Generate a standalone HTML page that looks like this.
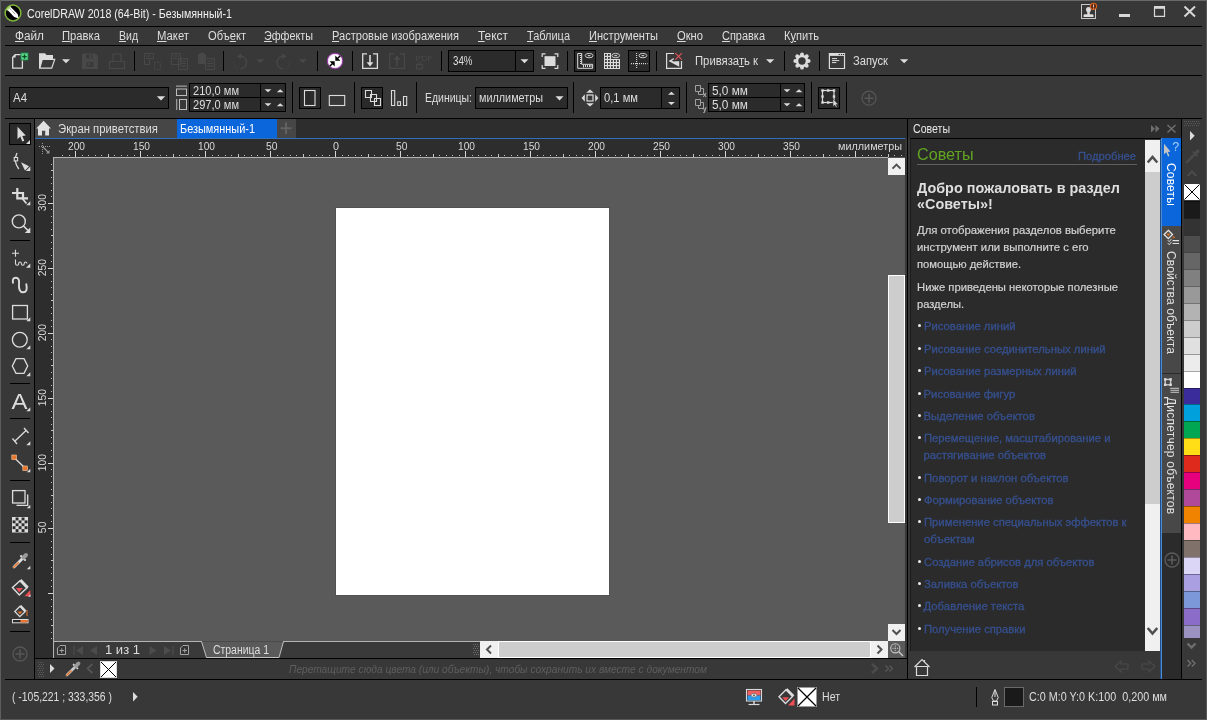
<!DOCTYPE html>
<html lang="ru"><head><meta charset="utf-8"><title>CorelDRAW 2018</title>
<style>
html,body{margin:0;padding:0}
body{width:1207px;height:720px;overflow:hidden;position:relative;background:#383838;font-family:'Liberation Sans',sans-serif;}
.root{position:absolute;left:0;top:0;width:1207px;height:720px;will-change:transform}
.a{position:absolute;display:block}
.t{white-space:pre;transform-origin:0 0;}
u{text-decoration:underline;text-underline-offset:1px}
</style></head>
<body>
<div class="root">
<div class="a" style="left:5px;top:26px;width:1197px;height:1px;background:#000;"></div>
<div class="a" style="left:5px;top:45px;width:1197px;height:1px;background:#000;"></div>
<div class="a" style="left:5px;top:75px;width:1197px;height:1px;background:#000;"></div>
<div class="a" style="left:5px;top:118px;width:1197px;height:1px;background:#000;"></div>
<div class="a" style="left:5px;top:679px;width:1197px;height:1px;background:#000;"></div>
<span class="a t" style="left:27px;top:6.24px;font-size:12px;line-height:17px;color:#f0f0f0;transform:scaleX(0.8887);">CorelDRAW 2018 (64-Bit) - Безымянный-1</span>
<span class="a t" style="left:15px;top:27.84px;font-size:12px;line-height:17px;color:#dedede;transform:scaleX(0.9825);"><u>Ф</u>айл</span>
<span class="a t" style="left:62px;top:27.84px;font-size:12px;line-height:17px;color:#dedede;transform:scaleX(0.9372);"><u>П</u>равка</span>
<span class="a t" style="left:119px;top:27.84px;font-size:12px;line-height:17px;color:#dedede;transform:scaleX(0.8748);"><u>В</u>ид</span>
<span class="a t" style="left:157px;top:27.84px;font-size:12px;line-height:17px;color:#dedede;transform:scaleX(0.9420);"><u>М</u>акет</span>
<span class="a t" style="left:208px;top:27.84px;font-size:12px;line-height:17px;color:#dedede;transform:scaleX(0.9297);">Объ<u>е</u>кт</span>
<span class="a t" style="left:264px;top:27.84px;font-size:12px;line-height:17px;color:#dedede;transform:scaleX(0.8981);"><u>Э</u>ффекты</span>
<span class="a t" style="left:332px;top:27.84px;font-size:12px;line-height:17px;color:#dedede;transform:scaleX(0.9228);"><u>Р</u>астровые изображения</span>
<span class="a t" style="left:478px;top:27.84px;font-size:12px;line-height:17px;color:#dedede;transform:scaleX(0.9928);"><u>Т</u>екст</span>
<span class="a t" style="left:527px;top:27.84px;font-size:12px;line-height:17px;color:#dedede;transform:scaleX(0.9137);"><u>Т</u>аблица</span>
<span class="a t" style="left:589px;top:27.84px;font-size:12px;line-height:17px;color:#dedede;transform:scaleX(0.9221);"><u>И</u>нструменты</span>
<span class="a t" style="left:677px;top:27.84px;font-size:12px;line-height:17px;color:#dedede;transform:scaleX(0.9322);"><u>О</u>кно</span>
<span class="a t" style="left:722px;top:27.84px;font-size:12px;line-height:17px;color:#dedede;transform:scaleX(0.9134);"><u>С</u>правка</span>
<span class="a t" style="left:784px;top:27.84px;font-size:12px;line-height:17px;color:#dedede;transform:scaleX(0.9222);">К<u>у</u>пить</span>
<div class="a" style="left:134px;top:51px;width:1px;height:20px;background:#000;"></div>
<div class="a" style="left:223px;top:51px;width:1px;height:20px;background:#000;"></div>
<div class="a" style="left:317px;top:51px;width:1px;height:20px;background:#000;"></div>
<div class="a" style="left:352px;top:51px;width:1px;height:20px;background:#000;"></div>
<div class="a" style="left:441px;top:51px;width:1px;height:20px;background:#000;"></div>
<div class="a" style="left:567px;top:51px;width:1px;height:20px;background:#000;"></div>
<div class="a" style="left:656px;top:51px;width:1px;height:20px;background:#000;"></div>
<div class="a" style="left:784px;top:51px;width:1px;height:20px;background:#000;"></div>
<div class="a" style="left:819px;top:51px;width:1px;height:20px;background:#000;"></div>
<div class="a" style="left:448px;top:50px;width:86px;height:22px;background:#2b2b2b;border:1px solid #000;box-sizing:border-box;"></div>
<div class="a" style="left:515px;top:51px;width:1px;height:20px;background:#000;"></div>
<span class="a t" style="left:453px;top:53.24px;font-size:12px;line-height:17px;color:#dedede;transform:scaleX(0.8114);">34%</span>
<div class="a" style="left:574px;top:50px;width:22px;height:22px;background:#2a2a2a;border:1px solid #000;box-sizing:border-box;"></div>
<div class="a" style="left:628px;top:50px;width:22px;height:22px;background:#2a2a2a;border:1px solid #000;box-sizing:border-box;"></div>
<span class="a t" style="left:695px;top:53.24px;font-size:12px;line-height:17px;color:#dedede;transform:scaleX(0.9405);">Привяза<u>т</u>ь к</span>
<span class="a t" style="left:853px;top:53.24px;font-size:12px;line-height:17px;color:#dedede;transform:scaleX(0.9322);">Запуск</span>
<div class="a" style="left:292px;top:82px;width:1px;height:31px;background:#000;"></div>
<div class="a" style="left:354px;top:82px;width:1px;height:31px;background:#000;"></div>
<div class="a" style="left:416px;top:82px;width:1px;height:31px;background:#000;"></div>
<div class="a" style="left:573px;top:82px;width:1px;height:31px;background:#000;"></div>
<div class="a" style="left:686px;top:82px;width:1px;height:31px;background:#000;"></div>
<div class="a" style="left:811px;top:82px;width:1px;height:31px;background:#000;"></div>
<div class="a" style="left:846px;top:82px;width:1px;height:31px;background:#000;"></div>
<div class="a" style="left:9px;top:87px;width:160px;height:22px;background:#2b2b2b;border:1px solid #000;box-sizing:border-box;"></div>
<span class="a t" style="left:13px;top:90.24px;font-size:12px;line-height:17px;color:#dedede;transform:scaleX(0.9532);">A4</span>
<div class="a" style="left:189px;top:83px;width:97px;height:15px;background:#2b2b2b;border:1px solid #000;box-sizing:border-box;"></div>
<div class="a" style="left:189px;top:97px;width:97px;height:15px;background:#2b2b2b;border:1px solid #000;box-sizing:border-box;"></div>
<div class="a" style="left:260px;top:84px;width:1px;height:27px;background:#000;"></div>
<span class="a t" style="left:193px;top:83.24px;font-size:12px;line-height:17px;color:#dedede;transform:scaleX(0.9223);">210,0 мм</span>
<span class="a t" style="left:193px;top:97.24px;font-size:12px;line-height:17px;color:#dedede;transform:scaleX(0.9223);">297,0 мм</span>
<div class="a" style="left:299px;top:87px;width:22px;height:22px;background:#2a2a2a;border:1px solid #000;box-sizing:border-box;"></div>
<div class="a" style="left:361px;top:87px;width:22px;height:22px;background:#2a2a2a;border:1px solid #000;box-sizing:border-box;"></div>
<span class="a t" style="left:425px;top:90.24px;font-size:12px;line-height:17px;color:#dedede;transform:scaleX(0.8724);">Единицы:</span>
<div class="a" style="left:475px;top:87px;width:93px;height:22px;background:#2b2b2b;border:1px solid #000;box-sizing:border-box;"></div>
<span class="a t" style="left:479px;top:90.24px;font-size:12px;line-height:17px;color:#dedede;transform:scaleX(0.9016);">миллиметры</span>
<div class="a" style="left:600px;top:87px;width:80px;height:22px;background:#2b2b2b;border:1px solid #000;box-sizing:border-box;"></div>
<div class="a" style="left:661px;top:88px;width:1px;height:20px;background:#000;"></div>
<span class="a t" style="left:604px;top:90.24px;font-size:12px;line-height:17px;color:#dedede;transform:scaleX(0.9311);">0,1 мм</span>
<div class="a" style="left:708px;top:83px;width:97px;height:15px;background:#2b2b2b;border:1px solid #000;box-sizing:border-box;"></div>
<div class="a" style="left:708px;top:97px;width:97px;height:15px;background:#2b2b2b;border:1px solid #000;box-sizing:border-box;"></div>
<div class="a" style="left:780px;top:84px;width:1px;height:27px;background:#000;"></div>
<span class="a t" style="left:712px;top:83.24px;font-size:12px;line-height:17px;color:#dedede;transform:scaleX(0.9859);">5,0 мм</span>
<span class="a t" style="left:712px;top:97.24px;font-size:12px;line-height:17px;color:#dedede;transform:scaleX(0.9859);">5,0 мм</span>
<div class="a" style="left:818px;top:87px;width:22px;height:22px;background:#2a2a2a;border:1px solid #000;box-sizing:border-box;"></div>
<div class="a" style="left:34px;top:118px;width:1px;height:561px;background:#000;"></div>
<div class="a" style="left:9px;top:123px;width:22px;height:22px;background:#2a2a2a;border:1px solid #000;box-sizing:border-box;"></div>
<div class="a" style="left:10px;top:178px;width:20px;height:1px;background:#000;"></div>
<div class="a" style="left:10px;top:240px;width:20px;height:1px;background:#000;"></div>
<div class="a" style="left:10px;top:383px;width:20px;height:1px;background:#000;"></div>
<div class="a" style="left:10px;top:418px;width:20px;height:1px;background:#000;"></div>
<div class="a" style="left:10px;top:480px;width:20px;height:1px;background:#000;"></div>
<div class="a" style="left:10px;top:542px;width:20px;height:1px;background:#000;"></div>
<div class="a" style="left:10px;top:631px;width:20px;height:1px;background:#000;"></div>
<div class="a" style="left:35px;top:119px;width:872px;height:19px;background:#2d2d2d;"></div>
<div class="a" style="left:35px;top:119px;width:142px;height:19px;background:#464646;"></div>
<div class="a" style="left:177px;top:119px;width:100px;height:19px;background:#0a66da;"></div>
<div class="a" style="left:277px;top:119px;width:19px;height:19px;background:#464646;"></div>
<span class="a t" style="left:58px;top:121.24px;font-size:12px;line-height:17px;color:#dedede;transform:scaleX(0.9433);">Экран приветствия</span>
<span class="a t" style="left:180px;top:121.24px;font-size:12px;line-height:17px;color:#ffffff;transform:scaleX(0.9100);">Безымянный-1</span>
<div class="a" style="left:35px;top:138px;width:870px;height:1px;background:#2e6fc0;"></div>
<div class="a" style="left:35px;top:139px;width:870px;height:18px;background:#2d2d2d;"></div>
<div class="a" style="left:35px;top:157px;width:18px;height:484px;background:#2d2d2d;"></div>
<div class="a" style="left:53px;top:157px;width:852px;height:484px;background:#5a5a5a;"></div>
<div class="a" style="left:53px;top:157px;width:835px;height:1px;background:#b4b4b4;"></div>
<div class="a" style="left:53px;top:157px;width:1px;height:501px;background:#b4b4b4;"></div>
<div class="a" style="left:335px;top:207px;width:275px;height:389px;background:#515151;"></div>
<div class="a" style="left:336px;top:208px;width:273px;height:387px;background:#ffffff;"></div>
<div class="a" style="left:62px;top:155px;width:1px;height:1px;background:#c0c0c0;"></div>
<div class="a" style="left:69px;top:155px;width:1px;height:1px;background:#c0c0c0;"></div>
<div class="a" style="left:75px;top:151px;width:1px;height:6px;background:#d4d4d4;"></div>
<div class="a" style="left:82px;top:155px;width:1px;height:1px;background:#c0c0c0;"></div>
<div class="a" style="left:88px;top:155px;width:1px;height:1px;background:#c0c0c0;"></div>
<div class="a" style="left:95px;top:155px;width:1px;height:1px;background:#c0c0c0;"></div>
<div class="a" style="left:101px;top:155px;width:1px;height:1px;background:#c0c0c0;"></div>
<div class="a" style="left:108px;top:154px;width:1px;height:3px;background:#c4c4c4;"></div>
<div class="a" style="left:114px;top:155px;width:1px;height:1px;background:#c0c0c0;"></div>
<div class="a" style="left:121px;top:155px;width:1px;height:1px;background:#c0c0c0;"></div>
<div class="a" style="left:127px;top:155px;width:1px;height:1px;background:#c0c0c0;"></div>
<div class="a" style="left:134px;top:155px;width:1px;height:1px;background:#c0c0c0;"></div>
<div class="a" style="left:140px;top:151px;width:1px;height:6px;background:#d4d4d4;"></div>
<div class="a" style="left:147px;top:155px;width:1px;height:1px;background:#c0c0c0;"></div>
<div class="a" style="left:153px;top:155px;width:1px;height:1px;background:#c0c0c0;"></div>
<div class="a" style="left:160px;top:155px;width:1px;height:1px;background:#c0c0c0;"></div>
<div class="a" style="left:166px;top:155px;width:1px;height:1px;background:#c0c0c0;"></div>
<div class="a" style="left:173px;top:154px;width:1px;height:3px;background:#c4c4c4;"></div>
<div class="a" style="left:179px;top:155px;width:1px;height:1px;background:#c0c0c0;"></div>
<div class="a" style="left:186px;top:155px;width:1px;height:1px;background:#c0c0c0;"></div>
<div class="a" style="left:192px;top:155px;width:1px;height:1px;background:#c0c0c0;"></div>
<div class="a" style="left:199px;top:155px;width:1px;height:1px;background:#c0c0c0;"></div>
<div class="a" style="left:205px;top:151px;width:1px;height:6px;background:#d4d4d4;"></div>
<div class="a" style="left:212px;top:155px;width:1px;height:1px;background:#c0c0c0;"></div>
<div class="a" style="left:218px;top:155px;width:1px;height:1px;background:#c0c0c0;"></div>
<div class="a" style="left:225px;top:155px;width:1px;height:1px;background:#c0c0c0;"></div>
<div class="a" style="left:231px;top:155px;width:1px;height:1px;background:#c0c0c0;"></div>
<div class="a" style="left:238px;top:154px;width:1px;height:3px;background:#c4c4c4;"></div>
<div class="a" style="left:244px;top:155px;width:1px;height:1px;background:#c0c0c0;"></div>
<div class="a" style="left:251px;top:155px;width:1px;height:1px;background:#c0c0c0;"></div>
<div class="a" style="left:257px;top:155px;width:1px;height:1px;background:#c0c0c0;"></div>
<div class="a" style="left:264px;top:155px;width:1px;height:1px;background:#c0c0c0;"></div>
<div class="a" style="left:270px;top:151px;width:1px;height:6px;background:#d4d4d4;"></div>
<div class="a" style="left:277px;top:155px;width:1px;height:1px;background:#c0c0c0;"></div>
<div class="a" style="left:283px;top:155px;width:1px;height:1px;background:#c0c0c0;"></div>
<div class="a" style="left:290px;top:155px;width:1px;height:1px;background:#c0c0c0;"></div>
<div class="a" style="left:296px;top:155px;width:1px;height:1px;background:#c0c0c0;"></div>
<div class="a" style="left:303px;top:154px;width:1px;height:3px;background:#c4c4c4;"></div>
<div class="a" style="left:309px;top:155px;width:1px;height:1px;background:#c0c0c0;"></div>
<div class="a" style="left:316px;top:155px;width:1px;height:1px;background:#c0c0c0;"></div>
<div class="a" style="left:322px;top:155px;width:1px;height:1px;background:#c0c0c0;"></div>
<div class="a" style="left:329px;top:155px;width:1px;height:1px;background:#c0c0c0;"></div>
<div class="a" style="left:335px;top:151px;width:1px;height:6px;background:#d4d4d4;"></div>
<div class="a" style="left:342px;top:155px;width:1px;height:1px;background:#c0c0c0;"></div>
<div class="a" style="left:348px;top:155px;width:1px;height:1px;background:#c0c0c0;"></div>
<div class="a" style="left:355px;top:155px;width:1px;height:1px;background:#c0c0c0;"></div>
<div class="a" style="left:361px;top:155px;width:1px;height:1px;background:#c0c0c0;"></div>
<div class="a" style="left:368px;top:154px;width:1px;height:3px;background:#c4c4c4;"></div>
<div class="a" style="left:374px;top:155px;width:1px;height:1px;background:#c0c0c0;"></div>
<div class="a" style="left:381px;top:155px;width:1px;height:1px;background:#c0c0c0;"></div>
<div class="a" style="left:387px;top:155px;width:1px;height:1px;background:#c0c0c0;"></div>
<div class="a" style="left:394px;top:155px;width:1px;height:1px;background:#c0c0c0;"></div>
<div class="a" style="left:400px;top:151px;width:1px;height:6px;background:#d4d4d4;"></div>
<div class="a" style="left:407px;top:155px;width:1px;height:1px;background:#c0c0c0;"></div>
<div class="a" style="left:413px;top:155px;width:1px;height:1px;background:#c0c0c0;"></div>
<div class="a" style="left:420px;top:155px;width:1px;height:1px;background:#c0c0c0;"></div>
<div class="a" style="left:426px;top:155px;width:1px;height:1px;background:#c0c0c0;"></div>
<div class="a" style="left:433px;top:154px;width:1px;height:3px;background:#c4c4c4;"></div>
<div class="a" style="left:439px;top:155px;width:1px;height:1px;background:#c0c0c0;"></div>
<div class="a" style="left:446px;top:155px;width:1px;height:1px;background:#c0c0c0;"></div>
<div class="a" style="left:452px;top:155px;width:1px;height:1px;background:#c0c0c0;"></div>
<div class="a" style="left:459px;top:155px;width:1px;height:1px;background:#c0c0c0;"></div>
<div class="a" style="left:465px;top:151px;width:1px;height:6px;background:#d4d4d4;"></div>
<div class="a" style="left:472px;top:155px;width:1px;height:1px;background:#c0c0c0;"></div>
<div class="a" style="left:478px;top:155px;width:1px;height:1px;background:#c0c0c0;"></div>
<div class="a" style="left:485px;top:155px;width:1px;height:1px;background:#c0c0c0;"></div>
<div class="a" style="left:491px;top:155px;width:1px;height:1px;background:#c0c0c0;"></div>
<div class="a" style="left:498px;top:154px;width:1px;height:3px;background:#c4c4c4;"></div>
<div class="a" style="left:504px;top:155px;width:1px;height:1px;background:#c0c0c0;"></div>
<div class="a" style="left:511px;top:155px;width:1px;height:1px;background:#c0c0c0;"></div>
<div class="a" style="left:517px;top:155px;width:1px;height:1px;background:#c0c0c0;"></div>
<div class="a" style="left:524px;top:155px;width:1px;height:1px;background:#c0c0c0;"></div>
<div class="a" style="left:530px;top:151px;width:1px;height:6px;background:#d4d4d4;"></div>
<div class="a" style="left:537px;top:155px;width:1px;height:1px;background:#c0c0c0;"></div>
<div class="a" style="left:543px;top:155px;width:1px;height:1px;background:#c0c0c0;"></div>
<div class="a" style="left:550px;top:155px;width:1px;height:1px;background:#c0c0c0;"></div>
<div class="a" style="left:556px;top:155px;width:1px;height:1px;background:#c0c0c0;"></div>
<div class="a" style="left:563px;top:154px;width:1px;height:3px;background:#c4c4c4;"></div>
<div class="a" style="left:569px;top:155px;width:1px;height:1px;background:#c0c0c0;"></div>
<div class="a" style="left:576px;top:155px;width:1px;height:1px;background:#c0c0c0;"></div>
<div class="a" style="left:582px;top:155px;width:1px;height:1px;background:#c0c0c0;"></div>
<div class="a" style="left:589px;top:155px;width:1px;height:1px;background:#c0c0c0;"></div>
<div class="a" style="left:595px;top:151px;width:1px;height:6px;background:#d4d4d4;"></div>
<div class="a" style="left:602px;top:155px;width:1px;height:1px;background:#c0c0c0;"></div>
<div class="a" style="left:608px;top:155px;width:1px;height:1px;background:#c0c0c0;"></div>
<div class="a" style="left:615px;top:155px;width:1px;height:1px;background:#c0c0c0;"></div>
<div class="a" style="left:621px;top:155px;width:1px;height:1px;background:#c0c0c0;"></div>
<div class="a" style="left:628px;top:154px;width:1px;height:3px;background:#c4c4c4;"></div>
<div class="a" style="left:634px;top:155px;width:1px;height:1px;background:#c0c0c0;"></div>
<div class="a" style="left:641px;top:155px;width:1px;height:1px;background:#c0c0c0;"></div>
<div class="a" style="left:647px;top:155px;width:1px;height:1px;background:#c0c0c0;"></div>
<div class="a" style="left:654px;top:155px;width:1px;height:1px;background:#c0c0c0;"></div>
<div class="a" style="left:660px;top:151px;width:1px;height:6px;background:#d4d4d4;"></div>
<div class="a" style="left:667px;top:155px;width:1px;height:1px;background:#c0c0c0;"></div>
<div class="a" style="left:673px;top:155px;width:1px;height:1px;background:#c0c0c0;"></div>
<div class="a" style="left:680px;top:155px;width:1px;height:1px;background:#c0c0c0;"></div>
<div class="a" style="left:686px;top:155px;width:1px;height:1px;background:#c0c0c0;"></div>
<div class="a" style="left:693px;top:154px;width:1px;height:3px;background:#c4c4c4;"></div>
<div class="a" style="left:699px;top:155px;width:1px;height:1px;background:#c0c0c0;"></div>
<div class="a" style="left:706px;top:155px;width:1px;height:1px;background:#c0c0c0;"></div>
<div class="a" style="left:712px;top:155px;width:1px;height:1px;background:#c0c0c0;"></div>
<div class="a" style="left:719px;top:155px;width:1px;height:1px;background:#c0c0c0;"></div>
<div class="a" style="left:725px;top:151px;width:1px;height:6px;background:#d4d4d4;"></div>
<div class="a" style="left:732px;top:155px;width:1px;height:1px;background:#c0c0c0;"></div>
<div class="a" style="left:738px;top:155px;width:1px;height:1px;background:#c0c0c0;"></div>
<div class="a" style="left:745px;top:155px;width:1px;height:1px;background:#c0c0c0;"></div>
<div class="a" style="left:751px;top:155px;width:1px;height:1px;background:#c0c0c0;"></div>
<div class="a" style="left:758px;top:154px;width:1px;height:3px;background:#c4c4c4;"></div>
<div class="a" style="left:764px;top:155px;width:1px;height:1px;background:#c0c0c0;"></div>
<div class="a" style="left:771px;top:155px;width:1px;height:1px;background:#c0c0c0;"></div>
<div class="a" style="left:777px;top:155px;width:1px;height:1px;background:#c0c0c0;"></div>
<div class="a" style="left:784px;top:155px;width:1px;height:1px;background:#c0c0c0;"></div>
<div class="a" style="left:790px;top:151px;width:1px;height:6px;background:#d4d4d4;"></div>
<div class="a" style="left:797px;top:155px;width:1px;height:1px;background:#c0c0c0;"></div>
<div class="a" style="left:803px;top:155px;width:1px;height:1px;background:#c0c0c0;"></div>
<div class="a" style="left:810px;top:155px;width:1px;height:1px;background:#c0c0c0;"></div>
<div class="a" style="left:816px;top:155px;width:1px;height:1px;background:#c0c0c0;"></div>
<div class="a" style="left:823px;top:154px;width:1px;height:3px;background:#c4c4c4;"></div>
<div class="a" style="left:829px;top:155px;width:1px;height:1px;background:#c0c0c0;"></div>
<div class="a" style="left:836px;top:155px;width:1px;height:1px;background:#c0c0c0;"></div>
<div class="a" style="left:842px;top:155px;width:1px;height:1px;background:#c0c0c0;"></div>
<div class="a" style="left:849px;top:155px;width:1px;height:1px;background:#c0c0c0;"></div>
<div class="a" style="left:855px;top:151px;width:1px;height:6px;background:#d4d4d4;"></div>
<div class="a" style="left:862px;top:155px;width:1px;height:1px;background:#c0c0c0;"></div>
<div class="a" style="left:868px;top:155px;width:1px;height:1px;background:#c0c0c0;"></div>
<div class="a" style="left:875px;top:155px;width:1px;height:1px;background:#c0c0c0;"></div>
<div class="a" style="left:881px;top:155px;width:1px;height:1px;background:#c0c0c0;"></div>
<div class="a" style="left:888px;top:154px;width:1px;height:3px;background:#c4c4c4;"></div>
<div class="a" style="left:894px;top:155px;width:1px;height:1px;background:#c0c0c0;"></div>
<div class="a" style="left:901px;top:155px;width:1px;height:1px;background:#c0c0c0;"></div>
<span class="a t" style="left:67.8px;top:138.69px;font-size:11px;line-height:15px;color:#d8d8d8;transform:scaleX(0.9260);">200</span>
<span class="a t" style="left:132.8px;top:138.69px;font-size:11px;line-height:15px;color:#d8d8d8;transform:scaleX(0.9260);">150</span>
<span class="a t" style="left:197.8px;top:138.69px;font-size:11px;line-height:15px;color:#d8d8d8;transform:scaleX(0.9260);">100</span>
<span class="a t" style="left:265.6px;top:138.69px;font-size:11px;line-height:15px;color:#d8d8d8;transform:scaleX(0.9388);">50</span>
<span class="a t" style="left:333.3px;top:138.69px;font-size:11px;line-height:15px;color:#d8d8d8;transform:scaleX(0.9796);">0</span>
<span class="a t" style="left:395.6px;top:138.69px;font-size:11px;line-height:15px;color:#d8d8d8;transform:scaleX(0.9388);">50</span>
<span class="a t" style="left:457.8px;top:138.69px;font-size:11px;line-height:15px;color:#d8d8d8;transform:scaleX(0.9260);">100</span>
<span class="a t" style="left:522.8px;top:138.69px;font-size:11px;line-height:15px;color:#d8d8d8;transform:scaleX(0.9260);">150</span>
<span class="a t" style="left:587.8px;top:138.69px;font-size:11px;line-height:15px;color:#d8d8d8;transform:scaleX(0.9260);">200</span>
<span class="a t" style="left:652.8px;top:138.69px;font-size:11px;line-height:15px;color:#d8d8d8;transform:scaleX(0.9260);">250</span>
<span class="a t" style="left:717.8px;top:138.69px;font-size:11px;line-height:15px;color:#d8d8d8;transform:scaleX(0.9260);">300</span>
<span class="a t" style="left:782.8px;top:138.69px;font-size:11px;line-height:15px;color:#d8d8d8;transform:scaleX(0.9260);">350</span>
<span class="a t" style="left:838px;top:138.69px;font-size:11px;line-height:15px;color:#d8d8d8;transform:scaleX(0.9834);">миллиметры</span>
<div class="a" style="left:51px;top:638px;width:1px;height:1px;background:#c0c0c0;"></div>
<div class="a" style="left:51px;top:632px;width:1px;height:1px;background:#c0c0c0;"></div>
<div class="a" style="left:51px;top:625px;width:2px;height:1px;background:#c4c4c4;"></div>
<div class="a" style="left:51px;top:619px;width:1px;height:1px;background:#c0c0c0;"></div>
<div class="a" style="left:51px;top:612px;width:1px;height:1px;background:#c0c0c0;"></div>
<div class="a" style="left:51px;top:606px;width:1px;height:1px;background:#c0c0c0;"></div>
<div class="a" style="left:51px;top:599px;width:1px;height:1px;background:#c0c0c0;"></div>
<div class="a" style="left:48px;top:593px;width:5px;height:1px;background:#d4d4d4;"></div>
<div class="a" style="left:51px;top:586px;width:1px;height:1px;background:#c0c0c0;"></div>
<div class="a" style="left:51px;top:580px;width:1px;height:1px;background:#c0c0c0;"></div>
<div class="a" style="left:51px;top:573px;width:1px;height:1px;background:#c0c0c0;"></div>
<div class="a" style="left:51px;top:567px;width:1px;height:1px;background:#c0c0c0;"></div>
<div class="a" style="left:51px;top:560px;width:2px;height:1px;background:#c4c4c4;"></div>
<div class="a" style="left:51px;top:554px;width:1px;height:1px;background:#c0c0c0;"></div>
<div class="a" style="left:51px;top:547px;width:1px;height:1px;background:#c0c0c0;"></div>
<div class="a" style="left:51px;top:541px;width:1px;height:1px;background:#c0c0c0;"></div>
<div class="a" style="left:51px;top:534px;width:1px;height:1px;background:#c0c0c0;"></div>
<div class="a" style="left:48px;top:528px;width:5px;height:1px;background:#d4d4d4;"></div>
<div class="a" style="left:51px;top:521px;width:1px;height:1px;background:#c0c0c0;"></div>
<div class="a" style="left:51px;top:515px;width:1px;height:1px;background:#c0c0c0;"></div>
<div class="a" style="left:51px;top:508px;width:1px;height:1px;background:#c0c0c0;"></div>
<div class="a" style="left:51px;top:502px;width:1px;height:1px;background:#c0c0c0;"></div>
<div class="a" style="left:51px;top:495px;width:2px;height:1px;background:#c4c4c4;"></div>
<div class="a" style="left:51px;top:489px;width:1px;height:1px;background:#c0c0c0;"></div>
<div class="a" style="left:51px;top:482px;width:1px;height:1px;background:#c0c0c0;"></div>
<div class="a" style="left:51px;top:476px;width:1px;height:1px;background:#c0c0c0;"></div>
<div class="a" style="left:51px;top:469px;width:1px;height:1px;background:#c0c0c0;"></div>
<div class="a" style="left:48px;top:463px;width:5px;height:1px;background:#d4d4d4;"></div>
<div class="a" style="left:51px;top:456px;width:1px;height:1px;background:#c0c0c0;"></div>
<div class="a" style="left:51px;top:450px;width:1px;height:1px;background:#c0c0c0;"></div>
<div class="a" style="left:51px;top:443px;width:1px;height:1px;background:#c0c0c0;"></div>
<div class="a" style="left:51px;top:437px;width:1px;height:1px;background:#c0c0c0;"></div>
<div class="a" style="left:51px;top:430px;width:2px;height:1px;background:#c4c4c4;"></div>
<div class="a" style="left:51px;top:424px;width:1px;height:1px;background:#c0c0c0;"></div>
<div class="a" style="left:51px;top:417px;width:1px;height:1px;background:#c0c0c0;"></div>
<div class="a" style="left:51px;top:411px;width:1px;height:1px;background:#c0c0c0;"></div>
<div class="a" style="left:51px;top:404px;width:1px;height:1px;background:#c0c0c0;"></div>
<div class="a" style="left:48px;top:398px;width:5px;height:1px;background:#d4d4d4;"></div>
<div class="a" style="left:51px;top:391px;width:1px;height:1px;background:#c0c0c0;"></div>
<div class="a" style="left:51px;top:385px;width:1px;height:1px;background:#c0c0c0;"></div>
<div class="a" style="left:51px;top:378px;width:1px;height:1px;background:#c0c0c0;"></div>
<div class="a" style="left:51px;top:372px;width:1px;height:1px;background:#c0c0c0;"></div>
<div class="a" style="left:51px;top:365px;width:2px;height:1px;background:#c4c4c4;"></div>
<div class="a" style="left:51px;top:359px;width:1px;height:1px;background:#c0c0c0;"></div>
<div class="a" style="left:51px;top:352px;width:1px;height:1px;background:#c0c0c0;"></div>
<div class="a" style="left:51px;top:346px;width:1px;height:1px;background:#c0c0c0;"></div>
<div class="a" style="left:51px;top:339px;width:1px;height:1px;background:#c0c0c0;"></div>
<div class="a" style="left:48px;top:333px;width:5px;height:1px;background:#d4d4d4;"></div>
<div class="a" style="left:51px;top:326px;width:1px;height:1px;background:#c0c0c0;"></div>
<div class="a" style="left:51px;top:320px;width:1px;height:1px;background:#c0c0c0;"></div>
<div class="a" style="left:51px;top:313px;width:1px;height:1px;background:#c0c0c0;"></div>
<div class="a" style="left:51px;top:307px;width:1px;height:1px;background:#c0c0c0;"></div>
<div class="a" style="left:51px;top:300px;width:2px;height:1px;background:#c4c4c4;"></div>
<div class="a" style="left:51px;top:294px;width:1px;height:1px;background:#c0c0c0;"></div>
<div class="a" style="left:51px;top:287px;width:1px;height:1px;background:#c0c0c0;"></div>
<div class="a" style="left:51px;top:281px;width:1px;height:1px;background:#c0c0c0;"></div>
<div class="a" style="left:51px;top:274px;width:1px;height:1px;background:#c0c0c0;"></div>
<div class="a" style="left:48px;top:268px;width:5px;height:1px;background:#d4d4d4;"></div>
<div class="a" style="left:51px;top:261px;width:1px;height:1px;background:#c0c0c0;"></div>
<div class="a" style="left:51px;top:255px;width:1px;height:1px;background:#c0c0c0;"></div>
<div class="a" style="left:51px;top:248px;width:1px;height:1px;background:#c0c0c0;"></div>
<div class="a" style="left:51px;top:242px;width:1px;height:1px;background:#c0c0c0;"></div>
<div class="a" style="left:51px;top:235px;width:2px;height:1px;background:#c4c4c4;"></div>
<div class="a" style="left:51px;top:229px;width:1px;height:1px;background:#c0c0c0;"></div>
<div class="a" style="left:51px;top:222px;width:1px;height:1px;background:#c0c0c0;"></div>
<div class="a" style="left:51px;top:216px;width:1px;height:1px;background:#c0c0c0;"></div>
<div class="a" style="left:51px;top:209px;width:1px;height:1px;background:#c0c0c0;"></div>
<div class="a" style="left:48px;top:203px;width:5px;height:1px;background:#d4d4d4;"></div>
<div class="a" style="left:51px;top:196px;width:1px;height:1px;background:#c0c0c0;"></div>
<div class="a" style="left:51px;top:190px;width:1px;height:1px;background:#c0c0c0;"></div>
<div class="a" style="left:51px;top:183px;width:1px;height:1px;background:#c0c0c0;"></div>
<div class="a" style="left:51px;top:177px;width:1px;height:1px;background:#c0c0c0;"></div>
<div class="a" style="left:51px;top:170px;width:2px;height:1px;background:#c4c4c4;"></div>
<div class="a" style="left:51px;top:164px;width:1px;height:1px;background:#c0c0c0;"></div>
<span class="a t" style="left:36.5px;top:202.0px;font-size:11px;line-height:11px;color:#d8d8d8;transform-origin:0 0;transform:rotate(-90deg) translate(-50%,0) scaleX(0.94);">300</span>
<span class="a t" style="left:36.5px;top:267.0px;font-size:11px;line-height:11px;color:#d8d8d8;transform-origin:0 0;transform:rotate(-90deg) translate(-50%,0) scaleX(0.94);">250</span>
<span class="a t" style="left:36.5px;top:332.0px;font-size:11px;line-height:11px;color:#d8d8d8;transform-origin:0 0;transform:rotate(-90deg) translate(-50%,0) scaleX(0.94);">200</span>
<span class="a t" style="left:36.5px;top:397.0px;font-size:11px;line-height:11px;color:#d8d8d8;transform-origin:0 0;transform:rotate(-90deg) translate(-50%,0) scaleX(0.94);">150</span>
<span class="a t" style="left:36.5px;top:462.0px;font-size:11px;line-height:11px;color:#d8d8d8;transform-origin:0 0;transform:rotate(-90deg) translate(-50%,0) scaleX(0.94);">100</span>
<span class="a t" style="left:36.5px;top:527.0px;font-size:11px;line-height:11px;color:#d8d8d8;transform-origin:0 0;transform:rotate(-90deg) translate(-50%,0) scaleX(0.94);">50</span>
<div class="a" style="left:888px;top:158px;width:17px;height:17px;background:#f0f0f0;"></div>
<div class="a" style="left:888px;top:275px;width:17px;height:248px;background:#cdcdcd;border:1px solid #ffffff;box-sizing:border-box;"></div>
<div class="a" style="left:888px;top:624px;width:17px;height:17px;background:#f0f0f0;"></div>
<div class="a" style="left:54px;top:641px;width:426px;height:17px;background:#3a3a3a;"></div>
<div class="a" style="left:35px;top:641px;width:18px;height:17px;background:#2d2d2d;"></div>
<div class="a" style="left:53px;top:641px;width:149px;height:1px;background:#b4b4b4;"></div>
<div class="a" style="left:283px;top:641px;width:197px;height:1px;background:#b4b4b4;"></div>
<svg class="a" style="left:198px;top:641px;" width="90" height="17" viewBox="0 0 90 17"><path d="M3.5 0.5 L8.5 16.5 L81 16.5 L85.5 0.5" fill="#5a5a5a" stroke="#c0c0c0" stroke-width="1"/></svg>
<span class="a t" style="left:105px;top:642.24px;font-size:12px;line-height:17px;color:#dedede;transform:scaleX(1.0858);">1 из 1</span>
<span class="a t" style="left:213px;top:642.24px;font-size:12px;line-height:17px;color:#dedede;transform:scaleX(0.8695);">Страница 1</span>
<div class="a" style="left:480px;top:641px;width:18px;height:17px;background:#f0f0f0;"></div>
<div class="a" style="left:498px;top:641px;width:373px;height:17px;background:#cdcdcd;border:1px solid #ffffff;box-sizing:border-box;"></div>
<div class="a" style="left:871px;top:641px;width:17px;height:17px;background:#f0f0f0;"></div>
<div class="a" style="left:888px;top:641px;width:17px;height:17px;background:#5a5a5a;"></div>
<div class="a" style="left:35px;top:658px;width:872px;height:1px;background:#000;"></div>
<div class="a" style="left:100px;top:661px;width:17px;height:17px;background:#ffffff;border:1px solid #d8d8d8;box-sizing:border-box;"></div>
<svg class="a" style="left:100px;top:661px;" width="17" height="17" viewBox="0 0 17 17"><path d="M1 1L16 16M16 1L1 16" stroke="#000" stroke-width="1"/></svg>
<span class="a t" style="left:289px;top:661.69px;font-size:11px;line-height:15px;color:#5e5e5e;font-style:italic;transform:scaleX(0.9258);">Перетащите сюда цвета (или объекты), чтобы сохранить их вместе с документом</span>
<div class="a" style="left:907px;top:119px;width:1px;height:560px;background:#000;"></div>
<div class="a" style="left:908px;top:119px;width:273px;height:19px;background:#2d2d2d;"></div>
<span class="a t" style="left:913px;top:121.24px;font-size:12px;line-height:17px;color:#e8e8e8;transform:scaleX(0.8813);">Советы</span>
<div class="a" style="left:910px;top:138px;width:252px;height:1px;background:#000;"></div>
<div class="a" style="left:910px;top:139px;width:235px;height:512px;background:#2b2b2b;"></div>
<div class="a" style="left:910px;top:139px;width:1px;height:512px;background:#1c1c1c;"></div>
<div class="a" style="left:1145px;top:140px;width:15px;height:511px;background:#f0f0f0;"></div>
<div class="a" style="left:1145px;top:172px;width:15px;height:332px;background:#cdcdcd;"></div>
<div class="a" style="left:1162px;top:139px;width:19px;height:540px;background:#2b2b2b;"></div>
<div class="a" style="left:1160px;top:139px;width:1px;height:540px;background:#1f4f8a;"></div>
<div class="a" style="left:1161px;top:138px;width:1px;height:541px;background:#4f8bd0;"></div>
<div class="a" style="left:1162px;top:138px;width:19px;height:88px;background:#0a66da;"></div>
<div class="a" style="left:1162px;top:226px;width:19px;height:147px;background:#484848;"></div>
<div class="a" style="left:1162px;top:374px;width:19px;height:159px;background:#484848;"></div>
<div class="a" style="left:1181px;top:119px;width:1px;height:560px;background:#000;"></div>
<span class="a t" style="left:1171px;top:163px;font-size:12px;line-height:12px;color:#ffffff;letter-spacing:0.17px;transform-origin:0 0;transform:rotate(90deg) translate(0,-50%);">Советы</span>
<span class="a t" style="left:1171px;top:251px;font-size:12px;line-height:12px;color:#e0e0e0;letter-spacing:0.14px;transform-origin:0 0;transform:rotate(90deg) translate(0,-50%);">Свойства объекта</span>
<span class="a t" style="left:1171px;top:397px;font-size:12px;line-height:12px;color:#e0e0e0;letter-spacing:0.23px;transform-origin:0 0;transform:rotate(90deg) translate(0,-50%);">Диспетчер объектов</span>
<span class="a t" style="left:917px;top:143.96px;font-size:16px;line-height:22px;color:#62a522;transform:scaleX(1.0095);">Советы</span>
<span class="a t" style="left:1078px;top:147.57px;font-size:11.33px;line-height:16px;color:#36508f;transform:scaleX(0.9872);-webkit-text-stroke:0.3px #36508f;">Подробнее</span>
<div class="a" style="left:917px;top:164px;width:220px;height:1px;background:#5f5f5f;"></div>
<span class="a t" style="left:917px;top:178.01px;font-size:14.4px;line-height:20px;color:#dedede;font-weight:700;">Добро пожаловать в раздел</span>
<span class="a t" style="left:917px;top:194.01px;font-size:14.4px;line-height:20px;color:#dedede;font-weight:700;">«Советы»!</span>
<span class="a t" style="left:917px;top:222.07px;font-size:11.33px;line-height:16px;color:#d2d2d2;-webkit-text-stroke:0.2px #d2d2d2;">Для отображения разделов выберите</span>
<span class="a t" style="left:917px;top:239.07px;font-size:11.33px;line-height:16px;color:#d2d2d2;-webkit-text-stroke:0.2px #d2d2d2;">инструмент или выполните с его</span>
<span class="a t" style="left:917px;top:256.07px;font-size:11.33px;line-height:16px;color:#d2d2d2;transform:scaleX(0.9878);-webkit-text-stroke:0.2px #d2d2d2;">помощью действие.</span>
<span class="a t" style="left:917px;top:279.07px;font-size:11.33px;line-height:16px;color:#d2d2d2;transform:scaleX(0.9932);-webkit-text-stroke:0.2px #d2d2d2;">Ниже приведены некоторые полезные</span>
<span class="a t" style="left:917px;top:296.07px;font-size:11.33px;line-height:16px;color:#d2d2d2;transform:scaleX(0.9820);-webkit-text-stroke:0.2px #d2d2d2;">разделы.</span>
<span class="a t" style="left:923.5px;top:318.07px;font-size:11.33px;line-height:16px;color:#36508f;transform:scaleX(0.9941);-webkit-text-stroke:0.3px #36508f;">Рисование линий</span>
<div class="a" style="left:917.5px;top:324px;width:3px;height:3px;background:#ececec;border-radius:1.5px;"></div>
<span class="a t" style="left:923.5px;top:341.07px;font-size:11.33px;line-height:16px;color:#36508f;transform:scaleX(0.9949);-webkit-text-stroke:0.3px #36508f;">Рисование соединительных линий</span>
<div class="a" style="left:917.5px;top:347px;width:3px;height:3px;background:#ececec;border-radius:1.5px;"></div>
<span class="a t" style="left:923.5px;top:363.07px;font-size:11.33px;line-height:16px;color:#36508f;transform:scaleX(0.9947);-webkit-text-stroke:0.3px #36508f;">Рисование размерных линий</span>
<div class="a" style="left:917.5px;top:369px;width:3px;height:3px;background:#ececec;border-radius:1.5px;"></div>
<span class="a t" style="left:923.5px;top:386.07px;font-size:11.33px;line-height:16px;color:#36508f;-webkit-text-stroke:0.3px #36508f;">Рисование фигур</span>
<div class="a" style="left:917.5px;top:392px;width:3px;height:3px;background:#ececec;border-radius:1.5px;"></div>
<span class="a t" style="left:923.5px;top:408.07px;font-size:11.33px;line-height:16px;color:#36508f;-webkit-text-stroke:0.3px #36508f;">Выделение объектов</span>
<div class="a" style="left:917.5px;top:414px;width:3px;height:3px;background:#ececec;border-radius:1.5px;"></div>
<span class="a t" style="left:923.5px;top:430.07px;font-size:11.33px;line-height:16px;color:#36508f;transform:scaleX(0.9921);-webkit-text-stroke:0.3px #36508f;">Перемещение, масштабирование и</span>
<div class="a" style="left:917.5px;top:436px;width:3px;height:3px;background:#ececec;border-radius:1.5px;"></div>
<span class="a t" style="left:923.5px;top:447.07px;font-size:11.33px;line-height:16px;color:#36508f;-webkit-text-stroke:0.3px #36508f;">растягивание объектов</span>
<span class="a t" style="left:923.5px;top:470.07px;font-size:11.33px;line-height:16px;color:#36508f;transform:scaleX(0.9956);-webkit-text-stroke:0.3px #36508f;">Поворот и наклон объектов</span>
<div class="a" style="left:917.5px;top:476px;width:3px;height:3px;background:#ececec;border-radius:1.5px;"></div>
<span class="a t" style="left:923.5px;top:492.07px;font-size:11.33px;line-height:16px;color:#36508f;transform:scaleX(0.9931);-webkit-text-stroke:0.3px #36508f;">Формирование объектов</span>
<div class="a" style="left:917.5px;top:498px;width:3px;height:3px;background:#ececec;border-radius:1.5px;"></div>
<span class="a t" style="left:923.5px;top:514.07px;font-size:11.33px;line-height:16px;color:#36508f;transform:scaleX(0.9942);-webkit-text-stroke:0.3px #36508f;">Применение специальных эффектов к</span>
<div class="a" style="left:917.5px;top:520px;width:3px;height:3px;background:#ececec;border-radius:1.5px;"></div>
<span class="a t" style="left:923.5px;top:531.07px;font-size:11.33px;line-height:16px;color:#36508f;transform:scaleX(1.0094);-webkit-text-stroke:0.3px #36508f;">объектам</span>
<span class="a t" style="left:923.5px;top:554.07px;font-size:11.33px;line-height:16px;color:#36508f;transform:scaleX(0.9932);-webkit-text-stroke:0.3px #36508f;">Создание абрисов для объектов</span>
<div class="a" style="left:917.5px;top:560px;width:3px;height:3px;background:#ececec;border-radius:1.5px;"></div>
<span class="a t" style="left:923.5px;top:576.07px;font-size:11.33px;line-height:16px;color:#36508f;transform:scaleX(0.9946);-webkit-text-stroke:0.3px #36508f;">Заливка объектов</span>
<div class="a" style="left:917.5px;top:582px;width:3px;height:3px;background:#ececec;border-radius:1.5px;"></div>
<span class="a t" style="left:923.5px;top:598.07px;font-size:11.33px;line-height:16px;color:#36508f;-webkit-text-stroke:0.3px #36508f;">Добавление текста</span>
<div class="a" style="left:917.5px;top:604px;width:3px;height:3px;background:#ececec;border-radius:1.5px;"></div>
<span class="a t" style="left:923.5px;top:621.07px;font-size:11.33px;line-height:16px;color:#36508f;transform:scaleX(0.9912);-webkit-text-stroke:0.3px #36508f;">Получение справки</span>
<div class="a" style="left:917.5px;top:627px;width:3px;height:3px;background:#ececec;border-radius:1.5px;"></div>
<div class="a" style="left:1184px;top:184px;width:16px;height:16px;background:#ffffff;"></div>
<svg class="a" style="left:1184px;top:184px;" width="16" height="16" viewBox="0 0 16 16"><path d="M0.5 0.5L15.5 15.5M15.5 0.5L0.5 15.5" stroke="#000" stroke-width="1"/></svg>
<div class="a" style="left:1184px;top:201px;width:16px;height:17px;background:#1a1a1a;"></div>
<div class="a" style="left:1184px;top:201px;width:16px;height:1px;background:rgba(0,0,0,0.35);"></div>
<div class="a" style="left:1184px;top:218px;width:16px;height:17px;background:#333333;"></div>
<div class="a" style="left:1184px;top:218px;width:16px;height:1px;background:rgba(0,0,0,0.35);"></div>
<div class="a" style="left:1184px;top:235px;width:16px;height:17px;background:#4d4d4d;"></div>
<div class="a" style="left:1184px;top:235px;width:16px;height:1px;background:rgba(0,0,0,0.35);"></div>
<div class="a" style="left:1184px;top:252px;width:16px;height:17px;background:#666666;"></div>
<div class="a" style="left:1184px;top:252px;width:16px;height:1px;background:rgba(0,0,0,0.35);"></div>
<div class="a" style="left:1184px;top:269px;width:16px;height:17px;background:#808080;"></div>
<div class="a" style="left:1184px;top:269px;width:16px;height:1px;background:rgba(0,0,0,0.35);"></div>
<div class="a" style="left:1184px;top:286px;width:16px;height:17px;background:#999999;"></div>
<div class="a" style="left:1184px;top:286px;width:16px;height:1px;background:rgba(0,0,0,0.35);"></div>
<div class="a" style="left:1184px;top:303px;width:16px;height:17px;background:#b3b3b3;"></div>
<div class="a" style="left:1184px;top:303px;width:16px;height:1px;background:rgba(0,0,0,0.35);"></div>
<div class="a" style="left:1184px;top:320px;width:16px;height:17px;background:#cccccc;"></div>
<div class="a" style="left:1184px;top:320px;width:16px;height:1px;background:rgba(0,0,0,0.35);"></div>
<div class="a" style="left:1184px;top:337px;width:16px;height:17px;background:#e0e0e0;"></div>
<div class="a" style="left:1184px;top:337px;width:16px;height:1px;background:rgba(0,0,0,0.35);"></div>
<div class="a" style="left:1184px;top:354px;width:16px;height:17px;background:#ececec;"></div>
<div class="a" style="left:1184px;top:354px;width:16px;height:1px;background:rgba(0,0,0,0.35);"></div>
<div class="a" style="left:1184px;top:371px;width:16px;height:17px;background:#ffffff;"></div>
<div class="a" style="left:1184px;top:371px;width:16px;height:1px;background:rgba(0,0,0,0.35);"></div>
<div class="a" style="left:1184px;top:388px;width:16px;height:16px;background:#3b2c9c;"></div>
<div class="a" style="left:1184px;top:388px;width:16px;height:1px;background:rgba(0,0,0,0.35);"></div>
<div class="a" style="left:1184px;top:404px;width:16px;height:17px;background:#00a0dc;"></div>
<div class="a" style="left:1184px;top:404px;width:16px;height:1px;background:rgba(0,0,0,0.35);"></div>
<div class="a" style="left:1184px;top:421px;width:16px;height:17px;background:#00a651;"></div>
<div class="a" style="left:1184px;top:421px;width:16px;height:1px;background:rgba(0,0,0,0.35);"></div>
<div class="a" style="left:1184px;top:438px;width:16px;height:17px;background:#ffde17;"></div>
<div class="a" style="left:1184px;top:438px;width:16px;height:1px;background:rgba(0,0,0,0.35);"></div>
<div class="a" style="left:1184px;top:455px;width:16px;height:17px;background:#de2a1c;"></div>
<div class="a" style="left:1184px;top:455px;width:16px;height:1px;background:rgba(0,0,0,0.35);"></div>
<div class="a" style="left:1184px;top:472px;width:16px;height:17px;background:#e6007e;"></div>
<div class="a" style="left:1184px;top:472px;width:16px;height:1px;background:rgba(0,0,0,0.35);"></div>
<div class="a" style="left:1184px;top:489px;width:16px;height:17px;background:#b0499a;"></div>
<div class="a" style="left:1184px;top:489px;width:16px;height:1px;background:rgba(0,0,0,0.35);"></div>
<div class="a" style="left:1184px;top:506px;width:16px;height:17px;background:#f08300;"></div>
<div class="a" style="left:1184px;top:506px;width:16px;height:1px;background:rgba(0,0,0,0.35);"></div>
<div class="a" style="left:1184px;top:523px;width:16px;height:17px;background:#ffb9c1;"></div>
<div class="a" style="left:1184px;top:523px;width:16px;height:1px;background:rgba(0,0,0,0.35);"></div>
<div class="a" style="left:1184px;top:540px;width:16px;height:17px;background:#80726b;"></div>
<div class="a" style="left:1184px;top:540px;width:16px;height:1px;background:rgba(0,0,0,0.35);"></div>
<div class="a" style="left:1184px;top:557px;width:16px;height:17px;background:#dcd6f6;"></div>
<div class="a" style="left:1184px;top:557px;width:16px;height:1px;background:rgba(0,0,0,0.35);"></div>
<div class="a" style="left:1184px;top:574px;width:16px;height:17px;background:#aa9fe0;"></div>
<div class="a" style="left:1184px;top:574px;width:16px;height:1px;background:rgba(0,0,0,0.35);"></div>
<div class="a" style="left:1184px;top:591px;width:16px;height:17px;background:#7c98d8;"></div>
<div class="a" style="left:1184px;top:591px;width:16px;height:1px;background:rgba(0,0,0,0.35);"></div>
<div class="a" style="left:1184px;top:608px;width:16px;height:17px;background:#8b6dc9;"></div>
<div class="a" style="left:1184px;top:608px;width:16px;height:1px;background:rgba(0,0,0,0.35);"></div>
<div class="a" style="left:1184px;top:625px;width:16px;height:13px;background:#9b92c2;"></div>
<div class="a" style="left:1184px;top:625px;width:16px;height:1px;background:rgba(0,0,0,0.35);"></div>
<span class="a t" style="left:12px;top:689.24px;font-size:12px;line-height:17px;color:#dedede;transform:scaleX(0.8664);">( -105,221 ; 333,356 )</span>
<div class="a" style="left:797px;top:687px;width:20px;height:20px;background:#ffffff;border:1px solid #9a9a9a;box-sizing:border-box;"></div>
<svg class="a" style="left:797px;top:687px;" width="20" height="20" viewBox="0 0 20 20"><path d="M1 1L19 19M19 1L1 19" stroke="#000" stroke-width="1.2"/></svg>
<span class="a t" style="left:822px;top:689.24px;font-size:12px;line-height:17px;color:#dedede;transform:scaleX(0.8807);">Нет</span>
<div class="a" style="left:976px;top:687px;width:1px;height:20px;background:#000;"></div>
<div class="a" style="left:1004px;top:687px;width:20px;height:20px;background:#1a1a1a;border:1px solid #6a6a6a;box-sizing:border-box;"></div>
<span class="a t" style="left:1029px;top:689.24px;font-size:12px;line-height:17px;color:#dedede;transform:scaleX(0.8978);">C:0 M:0 Y:0 K:100  0,200 мм</span>
<div class="a" style="left:0px;top:0px;width:1207px;height:1px;background:#6a6a6a;"></div>
<div class="a" style="left:0px;top:0px;width:1px;height:720px;background:#5e5e5e;"></div>
<div class="a" style="left:0px;top:719px;width:1207px;height:1px;background:#585858;"></div>
<div class="a" style="left:1206px;top:0px;width:1px;height:720px;background:#585858;"></div>
<svg class="a" style="left:0;top:0;pointer-events:none" width="1207" height="720" viewBox="0 0 1207 720"><circle cx="13" cy="13" r="7.900" fill="#000" stroke="#7fb63c" stroke-width="1.500"/>
<path d="M6.800 9.300 L10 6.300 L17.600 14 L18.800 18.600 L14.200 17 Z" fill="#ffffff"/>
<path d="M9.600 8.200 L15.800 14.800" stroke="#444" stroke-width="0.900" stroke-dasharray="0.900 0.900"/>
<path d="M6.200 9.800 L9.800 6 L11 7 L7.400 10.800Z" fill="#b4e07c"/>
<rect x="1081.500" y="4.500" width="14" height="14" fill="none" stroke="#c8c8c8" stroke-width="1"/>
<path d="M1083.500 17V15.300Q1083.500 14.300 1085 14.300H1087.300V12.500Q1086 11.200 1086 9.500Q1086 7 1088.500 7Q1091 7 1091 9.500Q1091 11.200 1089.700 12.500V14.300H1092Q1093.500 14.300 1093.500 15.300V17Z" fill="#dcdcdc"/>
<circle cx="1093.500" cy="6.300" r="3.100" fill="#5a2810" stroke="#dd621c" stroke-width="1.100"/>
<rect x="1093" y="4.500" width="1" height="2.600" fill="#f0c8a8"/><rect x="1093" y="7.600" width="1" height="0.900" fill="#f0c8a8"/>
<rect x="1119" y="14" width="11" height="3" fill="#d8d8d8"/>
<path d="M1154.500 8H1164.500V16.300H1154.500Z" fill="none" stroke="#d8d8d8" stroke-width="1.200"/><rect x="1154" y="6" width="11" height="2.600" fill="#d8d8d8"/>
<path d="M1184.500 6.500L1195 16.500M1195 6.500L1184.500 16.500" stroke="#d8d8d8" stroke-width="2" fill="none"/>
<path d="M15.200 54.700H22.400V68.200H12.700V57.200Z" fill="none" stroke="#dcdcdc" stroke-width="1.300"/><path d="M15.600 54.700V57.600H12.700Z" fill="#dcdcdc"/>
<rect x="20.900" y="52.900" width="7.200" height="7.200" fill="#58d488" stroke="#1d6e40" stroke-width="0.800"/><path d="M24.500 54.400V58.700M22.300 56.550H26.700" stroke="#0b4a24" stroke-width="1.200"/>
<path d="M39 68.600V53.300H45L46.500 55H53V59H42.500L39.600 68.600Z" fill="#dcdcdc"/>
<path d="M42.300 59.400H54.700L51.700 68.200H39.800Z" fill="#383838" stroke="#dcdcdc" stroke-width="1.200"/>
<path d="M62 59.3H70L66.0 63.3Z" fill="#dcdcdc"/>
<path d="M82 53.5H95.5L98 56V69H82Z" fill="#484848"/><rect x="86" y="54.5" width="7" height="4" fill="#3a3a3a"/><rect x="89.5" y="55" width="2" height="3" fill="#484848"/><rect x="86.5" y="62" width="7" height="5" fill="#3a3a3a"/><rect x="88" y="63" width="2" height="2" fill="#484848"/>
<path d="M113 61V54H121V61M109.5 61.5H124.5V68.5H109.5Z" fill="none" stroke="#484848" stroke-width="1.2"/>
<path d="M144.5 53.5H153.5V58.5H149.5V64.5H144.5Z M146 56H151 M146 58.5H149" fill="none" stroke="#484848" stroke-width="1"/><path d="M154.5 62.5H160.5V69.5H154.5Z" fill="none" stroke="#484848" stroke-width="1" stroke-dasharray="1.5 1"/>
<path d="M171.500 53.500H180.500V64.500H171.500Z M178.500 58.500H187.500V69.500H178.500Z M173 56H179 M173 58.500H177 M180 61H186 M180 63.500H186 M180 66H186" fill="none" stroke="#484848" stroke-width="1"/>
<path d="M198 54H206V64H198Z" fill="#484848"/><rect x="200" y="52.800" width="4" height="2" fill="#484848"/><path d="M205.500 58.500H214.500V69.500H205.500Z M207 61H213 M207 63.500H213 M207 66H213" fill="#383838" stroke="#484848" stroke-width="1"/>
<path d="M240.500 56 A6.500 6.500 0 0 1 241.500 68.800" fill="none" stroke="#484848" stroke-width="1.400"/><path d="M241.500 68.800 A6.500 6.500 0 0 1 234.200 60" fill="none" stroke="#484848" stroke-width="1.200" stroke-dasharray="1.500 2" opacity="0.700"/><path d="M241.300 53.300V59.300L237 56.300Z" fill="#484848"/>
<path d="M256.3 59.3H264.3L260.3 63.3Z" fill="#484848"/>
<path d="M283 56 A6.500 6.500 0 0 0 282 68.800" fill="none" stroke="#484848" stroke-width="1.400"/><path d="M282 68.800 A6.500 6.500 0 0 0 289.300 60" fill="none" stroke="#484848" stroke-width="1.200" stroke-dasharray="1.500 2" opacity="0.700"/><path d="M282.200 53.300V59.300L286.500 56.300Z" fill="#484848"/>
<path d="M299 59.3H307L303.0 63.3Z" fill="#484848"/>
<defs><radialGradient id="rg1" cx="0.5" cy="0.5" r="0.5"><stop offset="0.720" stop-color="#ffffff"/><stop offset="1" stop-color="#e6b8ec"/></radialGradient></defs>
<circle cx="335" cy="61" r="7.800" fill="url(#rg1)" stroke="#8f34a0" stroke-width="1"/>
<path d="M335.300 60.700V55.600L340.400 60.700Z M334.700 61.300V66.400L329.600 61.300Z" fill="#000"/><path d="M337.500 58.500L340.300 55.700 M332.500 63.500L329.700 66.300" stroke="#000" stroke-width="1.500"/>
<path d="M367 53.800H362.700V68.300H377.400V53.800H373" fill="none" stroke="#dcdcdc" stroke-width="1.300"/><path d="M370 55V64" stroke="#dcdcdc" stroke-width="1.600"/><path d="M366.600 62.300H373.400L370 66.600Z" fill="#dcdcdc"/>
<path d="M394 53.800H389.700V68.300H404.400V53.800H400" fill="none" stroke="#484848" stroke-width="1.200"/><path d="M397 58V66.500" stroke="#484848" stroke-width="1.600"/><path d="M393.600 59.700H400.400L397 55.400Z" fill="#484848"/>
<text x="415.500" y="60.500" font-family="Liberation Sans, sans-serif" font-size="8" fill="#484848" textLength="17" lengthAdjust="spacingAndGlyphs">PDF</text>
<path d="M416.500 64.500H422.500V69H416.500Z M418 64.500V63Q419.500 61 421 63V64.500" fill="none" stroke="#484848" stroke-width="1"/>
<path d="M520.5 59.3H528.5L524.5 63.3Z" fill="#dcdcdc"/>
<path d="M542.200 57V53.800H545.500 M554.500 53.800H557.800V57 M557.800 65V68.300H554.500 M545.500 68.300H542.200V65" fill="none" stroke="#dcdcdc" stroke-width="1.200"/><rect x="544.500" y="56.200" width="11" height="9.800" fill="#dcdcdc"/>
<path d="M577.700 53.500H581.700V64.300H592.600V68.300H577.700Z" fill="none" stroke="#dcdcdc" stroke-width="1"/><path d="M579.500 55.500H581.500 M580 57.500H581.500 M580 59.500H581.500 M580 61.500H581.500 M580 63.500H581.500 M583.500 65V67.500 M585.500 65V67 M587.500 65V67 M589.500 65V67 M591 65V67" stroke="#dcdcdc" stroke-width="1"/>
<ellipse cx="589.1" cy="55.6" rx="3.900" ry="2.200" fill="none" stroke="#c8c8c8" stroke-width="1"/><rect x="587.8000000000001" y="55.0" width="2.600" height="1.200" fill="#c8c8c8"/>
<path d="M604 53H611V59H620V69H604Z" fill="#dcdcdc"/><rect x="605" y="54.00" width="1.800" height="1.800" fill="#2e2e2e"/><rect x="608" y="54.00" width="1.800" height="1.800" fill="#2e2e2e"/><rect x="605" y="57.05" width="1.800" height="1.800" fill="#2e2e2e"/><rect x="608" y="57.05" width="1.800" height="1.800" fill="#2e2e2e"/><rect x="605" y="60.10" width="1.800" height="1.800" fill="#2e2e2e"/><rect x="608" y="60.10" width="1.800" height="1.800" fill="#2e2e2e"/><rect x="611" y="60.10" width="1.800" height="1.800" fill="#2e2e2e"/><rect x="614" y="60.10" width="1.800" height="1.800" fill="#2e2e2e"/><rect x="617" y="60.10" width="1.800" height="1.800" fill="#2e2e2e"/><rect x="605" y="63.15" width="1.800" height="1.800" fill="#2e2e2e"/><rect x="608" y="63.15" width="1.800" height="1.800" fill="#2e2e2e"/><rect x="611" y="63.15" width="1.800" height="1.800" fill="#2e2e2e"/><rect x="614" y="63.15" width="1.800" height="1.800" fill="#2e2e2e"/><rect x="617" y="63.15" width="1.800" height="1.800" fill="#2e2e2e"/><rect x="605" y="66.20" width="1.800" height="1.800" fill="#2e2e2e"/><rect x="608" y="66.20" width="1.800" height="1.800" fill="#2e2e2e"/><rect x="611" y="66.20" width="1.800" height="1.800" fill="#2e2e2e"/><rect x="614" y="66.20" width="1.800" height="1.800" fill="#2e2e2e"/><rect x="617" y="66.20" width="1.800" height="1.800" fill="#2e2e2e"/>
<ellipse cx="615.7" cy="55.6" rx="3.900" ry="2.200" fill="none" stroke="#c8c8c8" stroke-width="1"/><rect x="614.4000000000001" y="55.0" width="2.600" height="1.200" fill="#c8c8c8"/>
<path d="M636.600 53V69" stroke="#dcdcdc" stroke-width="1.100" stroke-dasharray="1 1"/><path d="M631 63.600H647.500" stroke="#dcdcdc" stroke-width="1.100" stroke-dasharray="1 1"/>
<ellipse cx="642.9" cy="55.6" rx="3.900" ry="2.200" fill="none" stroke="#c8c8c8" stroke-width="1"/><rect x="641.6" y="55.0" width="2.600" height="1.200" fill="#c8c8c8"/>
<path d="M674 53.500H666.600V68.400H681.500V61" fill="none" stroke="#dcdcdc" stroke-width="1.200"/><path d="M668.500 60.900L673.800 58V59.600L671.600 60.700L674.600 61.700V61.200H679.200V66.800Z" fill="#dcdcdc"/>
<path d="M675.300 53.200L681.800 59.600M681.800 53.200L675.300 59.600" stroke="#e4555a" stroke-width="1.100"/>
<path d="M766 59.3H774.3L770.15 63.3Z" fill="#dcdcdc"/>
<g fill="#dcdcdc"><circle cx="802" cy="61" r="6.300"/><circle cx="808.70" cy="61.00" r="1.900"/><circle cx="806.74" cy="65.74" r="1.900"/><circle cx="802.00" cy="67.70" r="1.900"/><circle cx="797.26" cy="65.74" r="1.900"/><circle cx="795.30" cy="61.00" r="1.900"/><circle cx="797.26" cy="56.26" r="1.900"/><circle cx="802.00" cy="54.30" r="1.900"/><circle cx="806.74" cy="56.26" r="1.900"/></g><circle cx="802" cy="61" r="3.700" fill="#383838"/>
<path d="M829.400 53.600H844.500V68.500H829.400Z" fill="none" stroke="#dcdcdc" stroke-width="1.200"/><rect x="829" y="53" width="16" height="2.900" fill="#dcdcdc"/><path d="M838.700 54.500H839.900 M840.900 54.500H842.100 M843 54.500H844.200" stroke="#2a2a2a" stroke-width="1.100"/><path d="M832 58.600H837 M832 60.600H839.200 M832 62.600H836.300" stroke="#dcdcdc" stroke-width="1"/>
<path d="M900 59.3H908.3L904.15 63.3Z" fill="#dcdcdc"/>
<path d="M156.8 96.2H165.2L161.0 100.4Z" fill="#dcdcdc"/>
<rect x="176" y="85.500" width="11" height="1.300" fill="#9a9a9a"/><rect x="176.500" y="89" width="10" height="6.500" fill="none" stroke="#bdbdbd" stroke-width="1"/>
<rect x="176" y="99" width="1.300" height="11" fill="#9a9a9a"/><rect x="179.500" y="99.500" width="7" height="10" fill="none" stroke="#bdbdbd" stroke-width="1"/>
<path d="M264.6 89.3H271.4L268.0 92.3Z" fill="#dcdcdc"/>
<path d="M276.8 92.3H283.6L280.20000000000005 89.3Z" fill="#dcdcdc"/>
<path d="M783.6 89.3H790.4L787.0 92.3Z" fill="#dcdcdc"/>
<path d="M795.6 92.3H802.4L799.0 89.3Z" fill="#dcdcdc"/>
<path d="M264.6 103.3H271.4L268.0 106.3Z" fill="#dcdcdc"/>
<path d="M276.8 106.3H283.6L280.20000000000005 103.3Z" fill="#dcdcdc"/>
<path d="M783.6 103.3H790.4L787.0 106.3Z" fill="#dcdcdc"/>
<path d="M795.6 106.3H802.4L799.0 103.3Z" fill="#dcdcdc"/>
<rect x="304.500" y="90.500" width="10.500" height="15" fill="none" stroke="#dcdcdc" stroke-width="1.100"/>
<rect x="329.300" y="95.500" width="15.400" height="10" fill="none" stroke="#dcdcdc" stroke-width="1.100"/>
<path d="M365.500 90.500H371.500V97.500H365.500Z M370.500 94.500H376.500V101.500H370.500Z M374.500 98.500H380.500V105.500H374.500Z" fill="none" stroke="#dcdcdc" stroke-width="1.100"/>
<path d="M391.500 90.500H394.700V105.500H391.500Z M397.700 101.700H400.500V105.500H397.700Z M403.500 96.500H406.700V105.500H403.500Z" fill="none" stroke="#dcdcdc" stroke-width="1.100"/>
<path d="M555.5 96.2H563.5L559.5 100.4Z" fill="#dcdcdc"/>
<rect x="587" y="95" width="6" height="6" fill="none" stroke="#dcdcdc" stroke-width="1.200"/><path d="M586.200 92.800H593.800L590 89.600Z M586.200 103.200H593.800L590 106.400Z M584.800 94.200V101.800L581.600 98Z M595.200 94.200V101.800L598.400 98Z" fill="#dcdcdc"/>
<path d="M668 94.8H674.8L671.4 91.8Z" fill="#dcdcdc"/>
<path d="M668 102H674.8L671.4 105Z" fill="#dcdcdc"/>
<path d="M695.500 85.5H700.500V91.5H695.500Z M701 88.5H703.500V94.5H698.500V92" fill="none" stroke="#a0a0a0" stroke-width="1"/>
<text x="702.800" y="97" font-family="Liberation Sans, sans-serif" font-size="7" font-weight="700" fill="#b0b0b0">x</text>
<path d="M695.500 99.5H700.500V105.5H695.500Z M701 102.5H703.500V108.5H698.500V106" fill="none" stroke="#a0a0a0" stroke-width="1"/>
<text x="702.800" y="111" font-family="Liberation Sans, sans-serif" font-size="7" font-weight="700" fill="#b0b0b0">y</text>
<rect x="822.500" y="90.500" width="11.500" height="12" fill="none" stroke="#dcdcdc" stroke-width="1.200"/>
<g fill="#dcdcdc"><rect x="821.3" y="89.3" width="2.400" height="2.400"/><rect x="827.0" y="89.3" width="2.400" height="2.400"/><rect x="832.8" y="89.3" width="2.400" height="2.400"/><rect x="821.3" y="95.3" width="2.400" height="2.400"/><rect x="832.8" y="95.3" width="2.400" height="2.400"/><rect x="821.3" y="101.3" width="2.400" height="2.400"/><rect x="827.0" y="101.3" width="2.400" height="2.400"/></g>
<path d="M833 99V106.500L834.800 105L836 107.300L837.200 106.700L836 104.500H838.200Z" fill="#dcdcdc" stroke="#2a2a2a" stroke-width="0.500"/>
<circle cx="869" cy="98.2" r="7" fill="none" stroke="#565656" stroke-width="1.300"/><path d="M864.5 98.2H873.5M869 93.7V102.7" stroke="#565656" stroke-width="1.600"/>
<path d="M17.500 126.800V139.200L20.300 136.600L22.300 141.600L24.300 140.700L22.300 135.900L25.800 135.600Z" fill="#dcdcdc"/>
<path d="M30 144V140L26 144Z" fill="#dcdcdc"/>
<path d="M17 153Q12.800 161 18.800 169" fill="none" stroke="#dcdcdc" stroke-width="1.300"/><rect x="14.200" y="157.500" width="3.400" height="3.400" fill="#383838" stroke="#dcdcdc" stroke-width="1.100"/><path d="M21 162.300L29 166.300L25 170.500Z" fill="#dcdcdc"/>
<path d="M30.3 171V166.5L25.8 171Z" fill="#dcdcdc"/>
<path d="M17.300 188V198.300H28 M12 193H23V199" fill="none" stroke="#dcdcdc" stroke-width="2.200"/><path d="M22.300 198.500L26.500 203.500" stroke="#dcdcdc" stroke-width="1.800"/>
<path d="M30.3 205.3V201.3L26.3 205.3Z" fill="#dcdcdc"/>
<circle cx="18.800" cy="221.400" r="6.500" fill="none" stroke="#dcdcdc" stroke-width="1.400"/><path d="M23.500 226L28 230.500" stroke="#dcdcdc" stroke-width="1.600"/><path d="M30.300 233V227.500L24.800 233Z" fill="#dcdcdc"/>
<path d="M15.500 249.800V256.800M12 253.300H19" stroke="#dcdcdc" stroke-width="1.100"/><path d="M15.500 259.500V263.500Q15.500 265.300 17.200 265.300Q18.700 265.300 18.700 263.500Q18.700 262 20 262Q21.300 262 21.300 263.500Q21.300 265.300 22.800 265.300Q24.200 265.300 24.200 263.500Q24.200 262 25.500 262Q26.800 262 27 263.500" fill="none" stroke="#dcdcdc" stroke-width="1.100"/>
<path d="M30.3 267.8V263.5L26.0 267.8Z" fill="#dcdcdc"/>
<path d="M13 282.800Q12 277.800 15.800 277.800Q19.600 277.800 19 283.500Q18.400 292.300 23 292.300Q28 292.300 26.300 284.300" fill="none" stroke="#dcdcdc" stroke-width="1.900" stroke-linecap="round"/>
<rect x="12.600" y="305.500" width="14.800" height="13.500" fill="none" stroke="#dcdcdc" stroke-width="1.300"/>
<path d="M30.3 321.3V317.3L26.3 321.3Z" fill="#dcdcdc"/>
<circle cx="19.800" cy="339.700" r="7.400" fill="none" stroke="#dcdcdc" stroke-width="1.300"/>
<path d="M30.3 349.3V345.3L26.3 349.3Z" fill="#dcdcdc"/>
<path d="M12.300 366L16 358.700H24L27.700 366L24 373.300H16Z" fill="none" stroke="#dcdcdc" stroke-width="1.300"/>
<path d="M30.3 376.3V372.3L26.3 376.3Z" fill="#dcdcdc"/>
<text x="11.600" y="409" font-family="Liberation Sans, sans-serif" font-size="21.500" fill="#dcdcdc" textLength="16" lengthAdjust="spacingAndGlyphs">A</text>
<path d="M30.3 411.3V407.3L26.3 411.3Z" fill="#dcdcdc"/>
<path d="M14.500 441.500L26 430.500 M12.500 438.500L17 444 M24 428L28.500 433" fill="none" stroke="#dcdcdc" stroke-width="1.300"/>
<path d="M30.3 445.3V441.3L26.3 445.3Z" fill="#dcdcdc"/>
<path d="M14 457.500L25.500 468.500" stroke="#dcdcdc" stroke-width="1.300"/><rect x="11.800" y="455" width="4.600" height="4.600" fill="#e8762c" stroke="#f4c9a8" stroke-width="0.600"/><rect x="22.800" y="466" width="4.600" height="4.600" fill="#e8762c" stroke="#f4c9a8" stroke-width="0.600"/>
<path d="M30.3 472.3V468.8L26.8 472.3Z" fill="#dcdcdc"/>
<rect x="12.600" y="490.600" width="12.400" height="12.400" fill="none" stroke="#dcdcdc" stroke-width="1.300"/><path d="M16.500 505.300H27.700V494.500" fill="none" stroke="#dcdcdc" stroke-width="1.300"/>
<path d="M30.3 508.3V504.8L26.8 508.3Z" fill="#dcdcdc"/>
<rect x="12" y="517" width="16" height="15.500" fill="#dcdcdc"/><rect x="15.6" y="517.50" width="2.900" height="2.900" fill="#2c2c2c"/><rect x="21.6" y="517.50" width="2.900" height="2.900" fill="#2c2c2c"/><rect x="12.6" y="520.40" width="2.900" height="2.900" fill="#2c2c2c"/><rect x="18.6" y="520.40" width="2.900" height="2.900" fill="#2c2c2c"/><rect x="24.6" y="520.40" width="2.900" height="2.900" fill="#2c2c2c"/><rect x="15.6" y="523.30" width="2.900" height="2.900" fill="#2c2c2c"/><rect x="21.6" y="523.30" width="2.900" height="2.900" fill="#2c2c2c"/><rect x="12.6" y="526.20" width="2.900" height="2.900" fill="#2c2c2c"/><rect x="18.6" y="526.20" width="2.900" height="2.900" fill="#2c2c2c"/><rect x="24.6" y="526.20" width="2.900" height="2.900" fill="#2c2c2c"/><rect x="15.6" y="529.10" width="2.900" height="2.900" fill="#2c2c2c"/><rect x="21.6" y="529.10" width="2.900" height="2.900" fill="#2c2c2c"/>
<g transform="translate(13.5 567.5) scale(1.0)"><path d="M0.500 -0.500L9 -9" stroke="#dcdcdc" stroke-width="2.800" stroke-linecap="round"/><path d="M0.200 -0.200L4.800 -4.800" stroke="#e8762c" stroke-width="1.500" stroke-linecap="round"/><path d="M7.500 -11.500L11.500 -7.500" stroke="#dcdcdc" stroke-width="2" stroke-linecap="round"/><path d="M10 -10L12.500 -12.500" stroke="#9a9a9a" stroke-width="4" stroke-linecap="round"/></g>
<path d="M30.3 569.3V565.8L26.8 569.3Z" fill="#dcdcdc"/>
<path d="M20 580.800L26.800 588L19.300 595L12.500 587.500Z" fill="#383838" stroke="#dcdcdc" stroke-width="1.500"/><path d="M20.500 580L27.800 587.700" stroke="#dcdcdc" stroke-width="2.600"/><path d="M15.800 588H22.800L19.300 592.300Z" fill="#ee4f55"/><path d="M30.300 590V596.300H24.500Z" fill="#ee4f55"/>
<path d="M30.5 596.8V594.3L28.0 596.8Z" fill="#dcdcdc"/>
<path d="M20 606.300L25 611.700L19.800 616.700L14.800 611.500Z" fill="#383838" stroke="#dcdcdc" stroke-width="1.300"/><path d="M20.500 605.800L25.700 611.300" stroke="#dcdcdc" stroke-width="2"/><path d="M17.500 611.500H22.500L20 614.300Z" fill="#e8762c"/><path d="M27 610V616" stroke="#e8762c" stroke-width="1"/>
<rect x="12.500" y="619.500" width="15.500" height="3.300" fill="#2a2a2a" stroke="#dcdcdc" stroke-width="1"/><rect x="20.500" y="620" width="7" height="2.500" fill="#e8762c"/>
<circle cx="20" cy="654" r="7" fill="none" stroke="#565656" stroke-width="1.300"/><path d="M15.5 654H24.5M20 649.5V658.5" stroke="#565656" stroke-width="1.600"/>
<path d="M36.200 128.600L43.600 120.800L51 128.600H49V135.600H45.200V130.800H42V135.600H38V128.600Z" fill="#e2e2e2"/>
<path d="M280.500 128.200H291.500M286 122.500V134" stroke="#626262" stroke-width="2"/>
<path d="M39 146.500H50" stroke="#9a9a9a" stroke-width="1" stroke-dasharray="1 1"/><path d="M42.500 143V154" stroke="#9a9a9a" stroke-width="1" stroke-dasharray="1 1"/><path d="M43 147L48.500 152.500" stroke="#9a9a9a" stroke-width="1.100"/><path d="M49.500 153.500V150L46 153.500Z" fill="#9a9a9a"/>
<path d="M892.500 168.600L896.500 164.600L900.500 168.600" fill="none" stroke="#505050" stroke-width="2"/>
<path d="M892.500 630L896.500 634L900.500 630" fill="none" stroke="#505050" stroke-width="2"/>
<path d="M491 645.500L487 649.500L491 653.500" fill="none" stroke="#505050" stroke-width="2"/>
<path d="M877.500 645.500L881.500 649.500L877.500 653.500" fill="none" stroke="#505050" stroke-width="2"/>
<circle cx="895.300" cy="648.300" r="4.600" fill="none" stroke="#c4c4c4" stroke-width="1.100"/><path d="M898.800 651.800L903 656" stroke="#c4c4c4" stroke-width="1.600"/><path d="M895.300 645.500V651.100M892.500 648.300H898.100" stroke="#c4c4c4" stroke-width="1" stroke-dasharray="1.200 1"/>
<g fill="#6a6a6a"><rect x="473" y="644" width="1" height="1"/><rect x="475" y="644" width="1" height="1"/><rect x="477" y="644" width="1" height="1"/><rect x="474" y="646" width="1" height="1"/><rect x="476" y="646" width="1" height="1"/><rect x="478" y="646" width="1" height="1"/><rect x="473" y="648" width="1" height="1"/><rect x="475" y="648" width="1" height="1"/><rect x="477" y="648" width="1" height="1"/><rect x="474" y="650" width="1" height="1"/><rect x="476" y="650" width="1" height="1"/><rect x="478" y="650" width="1" height="1"/><rect x="473" y="652" width="1" height="1"/><rect x="475" y="652" width="1" height="1"/><rect x="477" y="652" width="1" height="1"/><rect x="474" y="654" width="1" height="1"/><rect x="476" y="654" width="1" height="1"/><rect x="478" y="654" width="1" height="1"/></g>
<path d="M60 645.5H65.5V654.5H57.5V648Z" fill="#333" stroke="#a4a4a4" stroke-width="1"/><path d="M59.5 650.5H64M61.75 648.3V652.8" stroke="#a4a4a4" stroke-width="1"/>
<path d="M183 645.5H188.5V654.5H180.5V648Z" fill="#333" stroke="#a4a4a4" stroke-width="1"/><path d="M182.5 650.5H187M184.75 648.3V652.8" stroke="#a4a4a4" stroke-width="1"/>
<rect x="73.500" y="646" width="1.200" height="9" fill="#4c4c4c"/><path d="M83 646V655L76 650.500Z" fill="#4c4c4c"/>
<path d="M97 646V655L90 650.500Z" fill="#4c4c4c"/>
<path d="M149.500 646V655L156.500 650.500Z" fill="#4c4c4c"/>
<path d="M164 646V655L171 650.500Z" fill="#4c4c4c"/><rect x="172.300" y="646" width="1.200" height="9" fill="#4c4c4c"/>
<g fill="#5c5c5c"><rect x="38" y="662" width="1" height="1"/><rect x="40" y="662" width="1" height="1"/><rect x="42" y="662" width="1" height="1"/><rect x="39" y="664" width="1" height="1"/><rect x="41" y="664" width="1" height="1"/><rect x="43" y="664" width="1" height="1"/><rect x="38" y="666" width="1" height="1"/><rect x="40" y="666" width="1" height="1"/><rect x="42" y="666" width="1" height="1"/><rect x="39" y="668" width="1" height="1"/><rect x="41" y="668" width="1" height="1"/><rect x="43" y="668" width="1" height="1"/><rect x="38" y="670" width="1" height="1"/><rect x="40" y="670" width="1" height="1"/><rect x="42" y="670" width="1" height="1"/><rect x="39" y="672" width="1" height="1"/><rect x="41" y="672" width="1" height="1"/><rect x="43" y="672" width="1" height="1"/><rect x="38" y="674" width="1" height="1"/><rect x="40" y="674" width="1" height="1"/><rect x="42" y="674" width="1" height="1"/><rect x="39" y="676" width="1" height="1"/><rect x="41" y="676" width="1" height="1"/><rect x="43" y="676" width="1" height="1"/></g>
<path d="M50 664V673L54.500 668.500Z" fill="#dcdcdc"/>
<g transform="translate(66.5 675.5) scale(0.95)"><path d="M0.500 -0.500L9 -9" stroke="#c8c8c8" stroke-width="2.800" stroke-linecap="round"/><path d="M0.200 -0.200L4.800 -4.800" stroke="#e8762c" stroke-width="1.500" stroke-linecap="round"/><path d="M7.500 -11.500L11.500 -7.500" stroke="#c8c8c8" stroke-width="2" stroke-linecap="round"/><path d="M10 -10L12.500 -12.500" stroke="#9a9a9a" stroke-width="4" stroke-linecap="round"/></g>
<path d="M92.500 664L87.500 668.500L92.500 673" fill="none" stroke="#555" stroke-width="1.800"/>
<path d="M872 664L877 668.500L872 673" fill="none" stroke="#4c4c4c" stroke-width="2.400"/>
<path d="M885.500 665.500L888.500 668.500L885.500 671.500M889.500 665.500L892.500 668.500L889.500 671.500" fill="none" stroke="#5a5a5a" stroke-width="1.200"/>
<path d="M1151 125V132.500L1155 128.750Z M1155.500 125V132.500L1159.500 128.750Z" fill="#6e6e6e"/>
<path d="M1167.500 125L1175.500 132.500M1175.500 125L1167.500 132.500" stroke="#6e6e6e" stroke-width="1.500"/>
<path d="M1147.700 162.500L1152.500 157L1157.300 162.500" fill="none" stroke="#505050" stroke-width="2.600"/>
<path d="M1147.700 628L1152.500 633.500L1157.300 628" fill="none" stroke="#505050" stroke-width="2.600"/>
<path d="M914.500 667L922 659.500L929.500 667 M916.500 666.500V675.500H927.500V666.500 M916.500 666.500H927.500 M924.500 660V662.500" fill="none" stroke="#dcdcdc" stroke-width="1.200"/>
<path d="M1115 666.5L1121 661V664H1128V669H1121V672Z" fill="none" stroke="#4a4a4a" stroke-width="1.100"/>
<path d="M1155 666.5L1149 661V664H1142V669H1149V672Z" fill="none" stroke="#4a4a4a" stroke-width="1.100"/>
<path d="M1164 143.800V154.300L1166.300 152.300L1168 156.500L1169.400 155.900L1167.800 151.900L1170.400 151.500Z" fill="#c4c4c4"/>
<text x="1172.300" y="151.300" font-family="Liberation Sans, sans-serif" font-size="12.500" fill="#a8d0fa">?</text>
<path d="M1168.300 230.300L1172.500 234.500L1168.300 238.700L1164.100 234.500Z" fill="#484848" stroke="#e8e8e8" stroke-width="1.300"/><path d="M1166.400 233.600H1170.200L1168.300 236.600Z" fill="#dc7424"/><circle cx="1173.700" cy="237.300" r="1.200" fill="#b8622e"/><path d="M1167.800 240.200L1169.200 241.700L1171.500 238.900 M1167.800 243.200L1169.200 244.700L1171.500 241.900" fill="none" stroke="#dcdcdc" stroke-width="1"/><path d="M1172.500 240.700H1179 M1172.500 243.500H1179" stroke="#e0e0e0" stroke-width="1.200"/>
<rect x="1165.200" y="379.400" width="5.400" height="5.400" fill="none" stroke="#c8c8c8" stroke-width="1.400"/><g fill="#dcdcdc"><rect x="1164" y="378.200" width="2.400" height="2.400"/><rect x="1169.400" y="378.200" width="2.400" height="2.400"/><rect x="1164" y="383.600" width="2.400" height="2.400"/><rect x="1169.400" y="383.600" width="2.400" height="2.400"/></g><path d="M1170 388.300H1179 M1170.500 390.300H1179 M1170.500 392.300H1179" stroke="#c8c8c8" stroke-width="1"/>
<circle cx="1172" cy="560" r="7" fill="none" stroke="#5c5c5c" stroke-width="1.300"/><path d="M1167.5 560H1176.5M1172 555.5V564.5" stroke="#5c5c5c" stroke-width="1.600"/>
<g fill="#5a5a5a"><rect x="1184" y="121" width="1" height="1"/><rect x="1186" y="121" width="1" height="1"/><rect x="1188" y="121" width="1" height="1"/><rect x="1190" y="121" width="1" height="1"/><rect x="1192" y="121" width="1" height="1"/><rect x="1194" y="121" width="1" height="1"/><rect x="1196" y="121" width="1" height="1"/><rect x="1198" y="121" width="1" height="1"/><rect x="1185" y="123" width="1" height="1"/><rect x="1187" y="123" width="1" height="1"/><rect x="1189" y="123" width="1" height="1"/><rect x="1191" y="123" width="1" height="1"/><rect x="1193" y="123" width="1" height="1"/><rect x="1195" y="123" width="1" height="1"/><rect x="1197" y="123" width="1" height="1"/><rect x="1199" y="123" width="1" height="1"/><rect x="1184" y="125" width="1" height="1"/><rect x="1186" y="125" width="1" height="1"/><rect x="1188" y="125" width="1" height="1"/><rect x="1190" y="125" width="1" height="1"/><rect x="1192" y="125" width="1" height="1"/><rect x="1194" y="125" width="1" height="1"/><rect x="1196" y="125" width="1" height="1"/><rect x="1198" y="125" width="1" height="1"/></g>
<path d="M1190 131V140.500L1194.700 135.750Z" fill="#dcdcdc"/>
<g transform="translate(1186.5 162.5) scale(0.9)"><path d="M0.500 -0.500L9 -9" stroke="#4a4a4a" stroke-width="2.800" stroke-linecap="round"/><path d="M0.200 -0.200L4.800 -4.800" stroke="#4a4a4a" stroke-width="1.500" stroke-linecap="round"/><path d="M7.500 -11.500L11.500 -7.500" stroke="#4a4a4a" stroke-width="2" stroke-linecap="round"/><path d="M10 -10L12.500 -12.500" stroke="#4a4a4a" stroke-width="4" stroke-linecap="round"/></g>
<path d="M1187.500 176L1192 171.500L1196.500 176" fill="none" stroke="#4c4c4c" stroke-width="2"/>
<path d="M1187.500 643.500L1191.500 647.500L1195.500 643.500" fill="none" stroke="#6e6e6e" stroke-width="2.400"/>
<path d="M1187.500 660L1190.700 663.300L1187.500 666.600M1191.800 660L1195 663.300L1191.800 666.600" fill="none" stroke="#727272" stroke-width="1.300"/>
<path d="M133 692V701.500L137.700 696.750Z" fill="#dcdcdc"/>
<rect x="746.500" y="689.500" width="15" height="11.500" fill="#2e2e2e" stroke="#d8d8d8" stroke-width="1.100"/><rect x="747.500" y="690.500" width="13" height="5" fill="#ee5f62"/><rect x="747.500" y="695.500" width="13" height="4.800" fill="#2a9df0"/><ellipse cx="754" cy="695.300" rx="2.800" ry="1.900" fill="#e8e8e8" stroke="#666" stroke-width="0.600"/><circle cx="754" cy="695.300" r="0.900" fill="#444"/><path d="M748.500 704.500H759.500" stroke="#d8d8d8" stroke-width="1.200"/><path d="M754 701V704" stroke="#d8d8d8" stroke-width="1.500"/>
<path d="M786 689.800L792.500 696.500L785.500 703.500L779 696.800Z" fill="#383838" stroke="#dcdcdc" stroke-width="1.400"/><path d="M786.500 689L793.500 696.200" stroke="#dcdcdc" stroke-width="2.400"/><path d="M782.300 697.300H789L785.600 701Z" fill="#ee4f55"/><path d="M794.500 698.500V705.500H788Z" fill="#ee4f55"/>
<path d="M995 689.500L991.800 697.500L993.500 701H996.500L998.200 697.500Z M995 690V697" fill="none" stroke="#dcdcdc" stroke-width="1"/><rect x="992.500" y="701.500" width="5" height="3.500" fill="none" stroke="#dcdcdc" stroke-width="1"/></svg>
</div>
</body></html>
